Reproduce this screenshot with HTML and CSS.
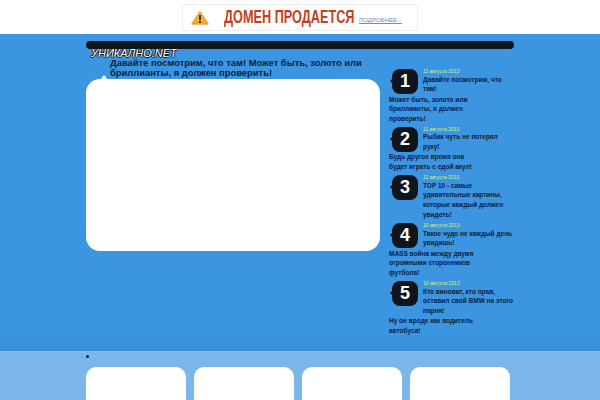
FILE: index.html
```html
<!DOCTYPE html>
<html lang="ru">
<head>
    <meta charset="UTF-8">
    <meta name="viewport" content="width=device-width, initial-scale=1.0">
    <title>Уникально.net</title>
    <link rel="stylesheet" href="styles.css">
</head>
<body>
    <!-- Рекламный баннер -->
    <div class="top">
        <div class="banner">
            <svg class="banner-icon" width="18" height="14" viewBox="0 0 18 14">
                <defs>
                    <linearGradient id="warn" x1="0" y1="0" x2="0" y2="1">
                        <stop offset="0" stop-color="#fbd860"/>
                        <stop offset="1" stop-color="#ee9a28"/>
                    </linearGradient>
                </defs>
                <path d="M9 1 L17 13 H1 Z" fill="url(#warn)" stroke="#eda63c" stroke-width="1.5" stroke-linejoin="round"/>
                <rect x="8" y="4" width="2" height="5" fill="#4a3010"/>
                <rect x="8" y="10" width="2" height="2" fill="#4a3010"/>
            </svg>
            <span class="banner-title">ДОМЕН ПРОДАЕТСЯ</span>
            <a class="banner-link">ПОДРОБНЕЕ...</a>
        </div>
    </div>

    <div class="main">
        <div class="wrap">
            <div class="topbar"></div>
            <div class="logo">УНИКАЛНО.NET</div>
            <div class="columns">
                <div class="content">
                    <h1 class="headline">Давайте посмотрим, что там! Может быть, золото или бриллианты, я должен проверить!</h1>
                    <div class="panel"></div>
                </div>
                <div class="sidebar">
                    <div class="item">
                        <div class="item-head">
                            <div class="num">1</div>
                            <div class="item-body">
                                <div class="date">11 августа 2013</div>
                                <div class="item-title">Давайте посмотрим, что там!</div>
                            </div>
                        </div>
                        <p class="excerpt">Может быть, золото или бриллианты, я должен проверить!</p>
                    </div>
                    <div class="item">
                        <div class="item-head">
                            <div class="num">2</div>
                            <div class="item-body">
                                <div class="date">11 августа 2013</div>
                                <div class="item-title">Рыбак чуть не потерял руку!</div>
                            </div>
                        </div>
                        <p class="excerpt">Будь другое время она будет играть с едой акул!</p>
                    </div>
                    <div class="item">
                        <div class="item-head">
                            <div class="num">3</div>
                            <div class="item-body">
                                <div class="date">11 августа 2013</div>
                                <div class="item-title">TOP 10 - самые удивительные картины, которые каждый должен увидеть!</div>
                            </div>
                        </div>
                    </div>
                    <div class="item">
                        <div class="item-head">
                            <div class="num">4</div>
                            <div class="item-body">
                                <div class="date">10 августа 2013</div>
                                <div class="item-title">Такое чудо не каждый день увидишь!</div>
                            </div>
                        </div>
                        <p class="excerpt">MASS война между двумя огромными сторонников футбола!</p>
                    </div>
                    <div class="item">
                        <div class="item-head">
                            <div class="num">5</div>
                            <div class="item-body">
                                <div class="date">10 августа 2013</div>
                                <div class="item-title">Кто виноват, кто прав, оставил свой BMW на этого парня!</div>
                            </div>
                        </div>
                        <p class="excerpt">Ну он вроде как водитель автобуса!</p>
                    </div>
                </div>
            </div>
        </div>
    </div>

    <div class="footer">
        <div class="wrap">
            <ul class="dots"><li></li></ul>
            <div class="cards">
                <div class="card"></div>
                <div class="card"></div>
                <div class="card"></div>
                <div class="card"></div>
            </div>
        </div>
    </div>
</body>
</html>
```

FILE: styles.css
```css
html, body {
    height: 400px;
    overflow: hidden;
}

body {
    font-family: 'Liberation Sans', Arial, sans-serif;
    margin: 0;
    background-color: #ffffff;
}

/* Баннер */
.top {
    height: 34px;
    display: flex;
    justify-content: center;
    align-items: flex-start;
    padding-top: 4px;
    box-sizing: border-box;
}

.banner {
    width: 236px;
    height: 27px;
    box-sizing: border-box;
    border: 1px solid #eeeeee;
    display: flex;
    align-items: center;
    padding-left: 8px;
}

.banner-icon {
    flex-shrink: 0;
}

/* Шрифт сжат по ширине: узкого начертания нет */
.banner-title {
    display: block;
    flex-shrink: 0;
    width: 131px;
    margin-left: 15px;
    font-size: 18px;
    font-weight: 700;
    color: #c4401c;
    white-space: nowrap;
    transform: scaleX(0.705);
    transform-origin: left center;
}

.banner-link {
    font-size: 6px;
    color: #6a8fc0;
    text-decoration: underline;
    margin: 5px 0 0 4px;
    white-space: nowrap;
}

/* Основная часть */
.main {
    height: 317px;
    background: linear-gradient(#3b95e0 94%, #388fd9);
    padding-top: 7px;
    box-sizing: border-box;
}

.wrap {
    width: 428px;
    margin: 0 auto;
    position: relative;
}

.topbar {
    height: 8px;
    background-color: #10151c;
    border-radius: 4px;
}

.logo {
    position: absolute;
    left: 5px;
    top: 7px;
    font-size: 11px;
    line-height: 10px;
    font-style: italic;
    color: #ffffff;
    text-shadow: 1px 0 0 #10151c, -1px 0 0 #10151c, 0 1px 0 #10151c, 0 -1px 0 #10151c;
    white-space: nowrap;
}

.columns {
    display: flex;
}

.content {
    width: 294px;
    position: relative;
}

.headline {
    margin: 9px 0 1px;
    padding-left: 24px;
    font-size: 9.4px;
    line-height: 10px;
    font-weight: 700;
    color: #10203a;
}

.panel {
    height: 172px;
    background-color: #ffffff;
    border-radius: 14px;
    position: relative;
}

/* Хвостик пузыря */
.panel::before {
    content: '';
    position: absolute;
    left: 14px;
    top: -4px;
    border-left: 4px solid transparent;
    border-right: 4px solid transparent;
    border-bottom: 5px solid #ffffff;
}

.sidebar {
    width: 125px;
    margin-left: 9px;
    padding-top: 19px;
}

.item {
    margin-bottom: 2.8px;
}

.item-head {
    display: flex;
}

.num {
    width: 26px;
    height: 25px;
    margin: 1px 5px 0 3px;
    flex-shrink: 0;
    background-color: #10151c;
    border-radius: 8px;
    color: #ffffff;
    font-size: 18px;
    font-weight: 700;
    line-height: 25px;
    text-align: center;
    position: relative;
}

.num::before {
    content: '';
    position: absolute;
    left: -2px;
    top: 10px;
    border-top: 2px solid transparent;
    border-bottom: 2px solid transparent;
    border-right: 2px solid #10151c;
}

.date {
    font-size: 5px;
    line-height: 6px;
    color: #d8f07a;
}

.item-title, .excerpt {
    font-size: 6.5px;
    font-weight: 700;
    color: #10203a;
}

.item-title {
    margin-top: 0.5px;
    line-height: 9.7px;
}

.excerpt {
    width: 90px;
    margin: 0.5px 0 0;
    line-height: 9.5px;
}

/* Подвал */
.footer {
    height: 49px;
    background-color: #7db6e8;
    border-top: 1px solid #8cc0ec;
    box-sizing: border-box;
    overflow: hidden;
}

.dots {
    margin: 0;
    padding: 0;
    list-style: none;
    height: 15px;
}

.dots li {
    width: 3px;
    height: 3px;
    border-radius: 50%;
    background-color: #10203a;
    position: relative;
    top: 3px;
}

.cards {
    display: flex;
    gap: 8px;
}

.card {
    width: 100px;
    height: 60px;
    background-color: #ffffff;
    border-radius: 10px;
}
```
